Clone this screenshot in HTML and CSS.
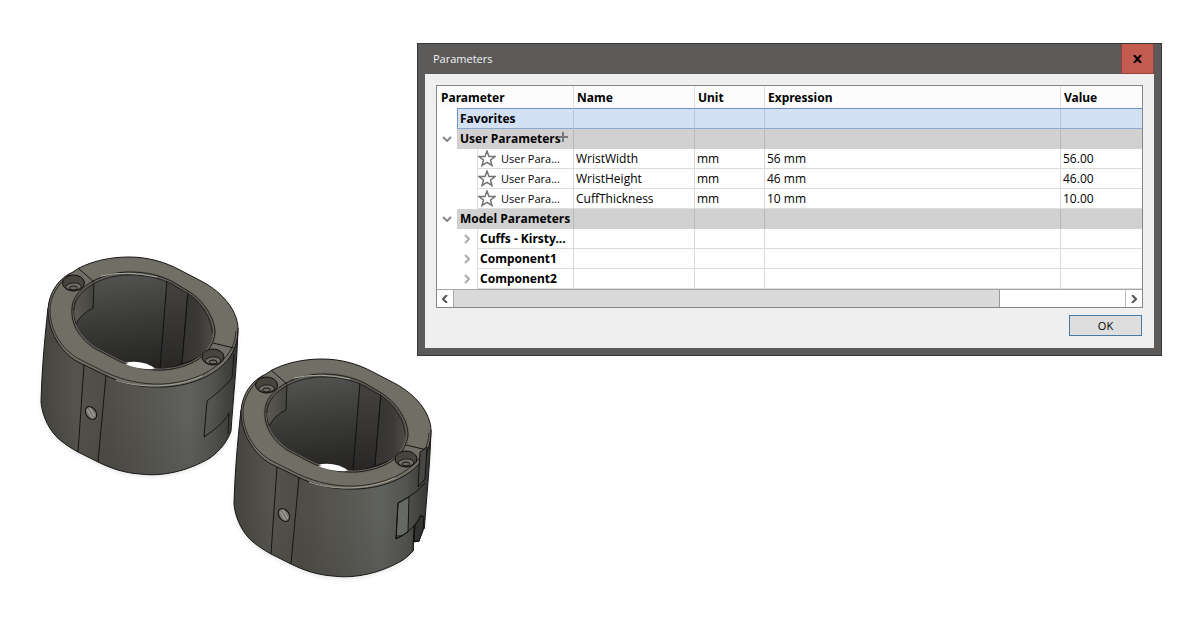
FILE: index.html
```html
<!DOCTYPE html>
<html lang="en">
<head>
<meta charset="utf-8">
<title>Parameters</title>
<link rel="stylesheet" href="styles.css">
</head>
<body>
<main class="canvas">
<svg class="model" viewBox="30 245 410 345" role="img" aria-label="Two cuffs">
  <defs>
    <linearGradient id="side" x1="0" x2="1"><stop offset="0" stop-color="#44433f"/><stop offset=".18" stop-color="#55534d"/><stop offset=".33" stop-color="#4f4c47"/><stop offset=".5" stop-color="#55544f"/><stop offset=".75" stop-color="#60625d"/><stop offset=".87" stop-color="#53534f"/><stop offset="1" stop-color="#343432"/></linearGradient>
    <linearGradient id="shade" x1="0" y1="0" x2="0" y2="1"><stop offset=".6" stop-color="#22211f" stop-opacity="0"/><stop offset="1" stop-color="#22211f" stop-opacity=".12"/></linearGradient>
    <linearGradient id="bore" x1=".2" y1="0" x2=".4" y2="1"><stop offset="0" stop-color="#555654"/><stop offset=".45" stop-color="#3d3d3b"/><stop offset="1" stop-color="#252423"/></linearGradient>
    <linearGradient id="boreside" x1="0" x2="1"><stop offset="0" stop-color="#5c5951"/><stop offset="1" stop-color="#45443f"/></linearGradient>
    <linearGradient id="borestrip" x1="0" y1="0" x2="0" y2="1"><stop offset="0" stop-color="#444340"/><stop offset="1" stop-color="#282726"/></linearGradient>
    <linearGradient id="borelight" x1="0" x2="1"><stop offset="0" stop-color="#353432"/><stop offset=".5" stop-color="#3a3937"/><stop offset="1" stop-color="#504e48"/></linearGradient>
    <filter id="soft" x="-20%" y="-20%" width="140%" height="140%"><feGaussianBlur stdDeviation="2"/></filter>
    <path id="body" d="M48 308C44 345 42 370 41 402C42 416 50 432 60 440C66 445 71 448 78 452L98 462C110 468 124 473 140 474C162 477 188 471 210 458C221 450 228 440 231 431C233 400 237 365 238 328Z"/>
    <path id="hole" d="M72 309C72 290 99 272 130 272C145 272 160 275 173 282L188 291C203 300 215 318 215 333C213 351 197 367 164 370C145 371 130 366 119 361L94 348C80 338 71 325 72 309Z"/>
    <g id="screw">
      <ellipse rx="11" ry="8" fill="#47443d" stroke="#111" />
      <path d="M-8 4C-6-1 7-2 8 4C4 9-4 9-8 4Z" fill="#716e65" stroke="#151515"/>
      <ellipse cy="5" rx="4" ry="2" fill="#6a675f" stroke="#111"/>
    </g>
    <g id="cuff">
      <use href="#body" fill="#888" opacity=".22" filter="url(#soft)" transform="translate(0 2)"/>
      <use href="#body" fill="url(#side)"/>
      <use href="#body" fill="url(#shade)" stroke="#171716"/>
      <path d="M79 268C93 261 110 257 129 257C148 257 165 262 180 270L203 282C223 293 238 311 238 329C238 342 234 354 224 364C208 380 181 388 155 387C136 387 119 382 105 375L78 362C60 352 48 331 48 309C49 292 59 278 73 272Z" fill="#716e65" stroke="#151514"/>
      <path d="M236 331C235 347 228 357 215 367C199 379 175 385 153 384C133 383 118 378 105 372L79 359C61 349 51 331 50 312C49 296 60 282 70 274" fill="none" stroke="#292825"/>
      <path d="M116 380C140 389 176 388 202 376" fill="none" stroke="#a3a198" stroke-width="1"/>
      <use href="#hole" fill="url(#bore)" stroke="#1c1b19"/>
      <path d="M94 281L93 308Q81 314 76 324C70 306 74 294 94 281Z" fill="url(#boreside)" stroke="#151514"/>
      <path d="M167 280L188 291L182 364Q171 369 160 369Z" fill="url(#borestrip)" stroke="#111"/>
      <path d="M188 291C203 300 215 318 215 333C213 347 203 358 182 364Z" fill="url(#borelight)" stroke="#111"/>
      <path d="M124 363Q142 359 156 369Q137 371 124 363Z" fill="#fff"/>
      <use href="#hole" fill="none" stroke="#69665e" stroke-width="3"/>
      <use href="#hole" fill="none" stroke="#1c1b19"/>
      <path d="M125 364Q141 360 154 369Q138 370 125 364Z" fill="#fff"/>
      <path d="M74 311C74 292 99 275 130 275C147 275 160 278 173 285L187 293C201 302 212 319 212 333" fill="none" stroke="#252420"/>
      <path d="M101 276Q126 270 157 277" fill="none" stroke="#a9a8a0"/>
      <path d="M78 268L94 282M213 343L234 348M84 365L78 452M106 375L98 462" fill="none" stroke="#151514"/>
      <use href="#screw" transform="translate(73.5 283)"/>
      <use href="#screw" transform="translate(213 357)"/>
      <g transform="translate(91 413) rotate(-35)"><ellipse rx="5" ry="7" fill="#77756e" stroke="#111"/><path d="M-1-5L-2 5M2-5L1 5" stroke="#aaa9a3"/></g>
    </g>
  </defs>
  <use href="#cuff"/>
  <path d="M234 354L232 378C225 387 216 394 207 401L204 437C214 430 224 423 229 413L228 434M204 437L207 435" fill="none" stroke="#151514"/>
  <use href="#cuff" transform="translate(193 102)"/>
  <path d="M414 549V542H419L424 529L432 526L429 558H414Z" fill="#fff"/>
  <path d="M398 503L409 497L408 532L396 539Z" fill="#666a66" stroke="#151514"/>
  <path d="M420 452L418 487L425 479L427 447Z" fill="#484744" stroke="#111"/>
  <path d="M425 483C417 492 408 498 398 503L396 539C409 532 417 525 421 515L419 541L414 542L415 525M414 525L413 550M396 536L402 536" fill="none" stroke="#111"/>
  <path d="M415 525L421 516L424 517L423 530L419 541H414Z" fill="#343331" stroke="#111"/>
</svg>

<section class="dialog" role="dialog" aria-labelledby="title">
  <header class="titlebar">
    <h1 class="title" id="title">Parameters</h1>
    <button class="close" type="button" aria-label="Close"><svg width="9" height="8" viewBox="0 0 9 8"><path d="M1 0L8 8M8 0L1 8" stroke="#000" stroke-width="2"/></svg></button>
  </header>
  <div class="content">
    <div class="frame">
      <table class="grid">
        <colgroup><col class="c-param"><col class="c-name"><col class="c-unit"><col class="c-expr"><col></colgroup>
        <thead><tr><th>Parameter</th><th>Name</th><th>Unit</th><th>Expression</th><th>Value</th></tr></thead>
        <tbody>
          <tr class="favorites"><td><div class="tree"><span class="toggle"></span><span class="label">Favorites</span></div></td><td></td><td></td><td></td><td></td></tr>
          <tr class="group"><td><div class="tree"><button class="toggle" type="button" aria-label="Collapse User Parameters"><svg width="10" height="6" viewBox="0 0 10 6"><path d="M1 1L5 5L9 1"/></svg></button><span class="label">User Parameters<button class="add" type="button" aria-label="Add parameter"><svg width="11" height="11" viewBox="0 0 11 11"><path d="M5 0V10M0 5H10"/></svg></button></span></div></td><td></td><td></td><td></td><td></td></tr>
          <tr><td><div class="tree leaf"><span class="label"><button class="star" type="button" aria-label="Favorite WristWidth"><svg width="18" height="17" viewBox="0 0 18 17"><path d="M9 1L11 6.500H17L12.500 10L14 15.500L9 12.300L4 15.500L5.500 10L1 6.500H7Z"/></svg></button>User Para...</span></div></td><td>WristWidth</td><td>mm</td><td>56 mm</td><td>56.00</td></tr>
          <tr><td><div class="tree leaf"><span class="label"><button class="star" type="button" aria-label="Favorite WristHeight"><svg width="18" height="17" viewBox="0 0 18 17"><path d="M9 1L11 6.500H17L12.500 10L14 15.500L9 12.300L4 15.500L5.500 10L1 6.500H7Z"/></svg></button>User Para...</span></div></td><td>WristHeight</td><td>mm</td><td>46 mm</td><td>46.00</td></tr>
          <tr><td><div class="tree leaf"><span class="label"><button class="star" type="button" aria-label="Favorite CuffThickness"><svg width="18" height="17" viewBox="0 0 18 17"><path d="M9 1L11 6.500H17L12.500 10L14 15.500L9 12.300L4 15.500L5.500 10L1 6.500H7Z"/></svg></button>User Para...</span></div></td><td>CuffThickness</td><td>mm</td><td>10 mm</td><td>10.00</td></tr>
          <tr class="group"><td><div class="tree"><button class="toggle" type="button" aria-label="Collapse Model Parameters"><svg width="10" height="6" viewBox="0 0 10 6"><path d="M1 1L5 5L9 1"/></svg></button><span class="label">Model Parameters</span></div></td><td></td><td></td><td></td><td></td></tr>
          <tr class="component"><td><div class="tree child"><button class="toggle" type="button" aria-label="Expand Cuffs"><svg width="6" height="10" viewBox="0 0 6 10"><path d="M1 1L5 5L1 9"/></svg></button><span class="label">Cuffs - Kirsty...</span></div></td><td></td><td></td><td></td><td></td></tr>
          <tr class="component"><td><div class="tree child"><button class="toggle" type="button" aria-label="Expand Component1"><svg width="6" height="10" viewBox="0 0 6 10"><path d="M1 1L5 5L1 9"/></svg></button><span class="label">Component1</span></div></td><td></td><td></td><td></td><td></td></tr>
          <tr class="component"><td><div class="tree child"><button class="toggle" type="button" aria-label="Expand Component2"><svg width="6" height="10" viewBox="0 0 6 10"><path d="M1 1L5 5L1 9"/></svg></button><span class="label">Component2</span></div></td><td></td><td></td><td></td><td></td></tr>
        </tbody>
      </table>
      <div class="scrollbar">
        <button class="arrow" type="button" aria-label="Scroll left"><svg width="6" height="8" viewBox="0 0 6 8"><path d="M5 0L1 4L5 8"/></svg></button>
        <div class="track"><div class="thumb"></div></div>
        <button class="arrow" type="button" aria-label="Scroll right"><svg width="6" height="8" viewBox="0 0 6 8"><path d="M1 0L5 4L1 8"/></svg></button>
      </div>
    </div>
    <footer class="actions"><button class="ok" type="button">OK</button></footer>
  </div>
</section>
</main>
</body>
</html>
```
FILE: styles.css
```css
* { box-sizing: border-box; }
body { margin: 0; background: #fff; color: #000; font: 12px/16px "Open Sans", "Noto Sans", sans-serif; }
button { padding: 0; border: 0; background: none; color: inherit; font: inherit; }
svg { display: block; }
.canvas { position: relative; min-height: 100vh; overflow: hidden; }
.model { position: absolute; left: 30px; top: 245px; width: 410px; height: 345px; }
.dialog { position: absolute; left: 417px; right: 39px; top: 43px; padding: 0 7px 7px; border: 1px solid #383737; background: #5b5a59; }
.titlebar { display: flex; align-items: stretch; justify-content: space-between; height: 30px; }
.title { margin: 0; padding: 7px 8px; color: #f2f2f2; font-size: 11px; font-weight: 400; }
.close { display: flex; align-items: center; justify-content: center; width: 33px; border: 1px solid #8f423b; border-top: 0; background: #c35b50; }
.content { padding: 11px 11px 12px; background: #efefef; }
.frame { border: 1px solid #858688; background: #fff; }
.grid { width: 100%; table-layout: fixed; border-collapse: separate; border-spacing: 0; }
.c-param { width: 137px; }
.c-name { width: 121px; }
.c-unit { width: 70px; }
.c-expr { width: 296px; }
th { height: 22px; padding: 1px 3px 0; border-right: 1px solid #dcdcdc; background: #fcfcfc; text-align: left; font-family: "Noto Sans", sans-serif; font-size: 12px; font-weight: 700; }
th:first-child { padding-left: 4px; }
td { height: 20px; padding: 0 2px; border-right: 1px solid #d9d9d9; border-bottom: 1px solid #dcdcdc; }
th:last-child, td:last-child { border-right: 0; }
td:first-child { padding: 0; border-bottom: 0; }
.tree { display: flex; height: 20px; }
.toggle { display: flex; align-items: center; justify-content: center; flex: 0 0 20px; }
.toggle path { fill: none; stroke: #888; stroke-width: 2; }
.child .toggle path { stroke: #aaa; }
.leaf { padding-left: 40px; }
.child { padding-left: 20px; }
.label { display: flex; flex: 1; align-items: center; white-space: nowrap; border-bottom: 1px solid #dcdcdc; }
.leaf .label { gap: 5px; border-left: 1px solid #dcdcdc; font-size: 11px; }
.child .label { padding-left: 2px; border-left: 1px solid #dcdcdc; font-family: "Noto Sans", sans-serif; font-weight: 700; }
.star path { fill: #fff; stroke: #747474; stroke-width: 1.5; }
.favorites .tree { height: 21px; }
.favorites .label, .favorites td:not(:first-child) { border-top: 1px solid #6f92c0; border-bottom: 1px solid #8ba8cd; background: #d2e1f4; }
.favorites td { height: 21px; border-right-color: #b4c7df; }
.favorites .label { padding-left: 2px; border-left: 1px solid #6f92c0; font-weight: 700; }
.group .label, .group td:not(:first-child) { border-bottom-color: #d1d1d1; background: #d1d1d1; }
.group td { border-right-color: #b8b8b8; }
.group .label { padding-left: 3px; font-weight: 700; }
.add { margin-left: -3px; padding-bottom: 2px; }
.add path { fill: none; stroke: #777; stroke-width: 2; }
.scrollbar { display: flex; height: 18px; border-top: 1px solid #a5a5a5; }
.arrow { display: flex; align-items: center; justify-content: center; width: 17px; border-right: 1px solid #aaa; }
.arrow:last-child { border-right: 0; border-left: 1px solid #bbb; }
.arrow path { fill: none; stroke: #555; stroke-width: 2; }
.track { flex: 1; }
.thumb { width: 81.4%; height: 100%; border-right: 1px solid #999; background: #dadada; }
.actions { display: flex; justify-content: flex-end; padding: 7px 1px 0; }
.ok { width: 73px; height: 21px; border: 1px solid #467ba6; background: #dedede; font-size: 11px; }
```
